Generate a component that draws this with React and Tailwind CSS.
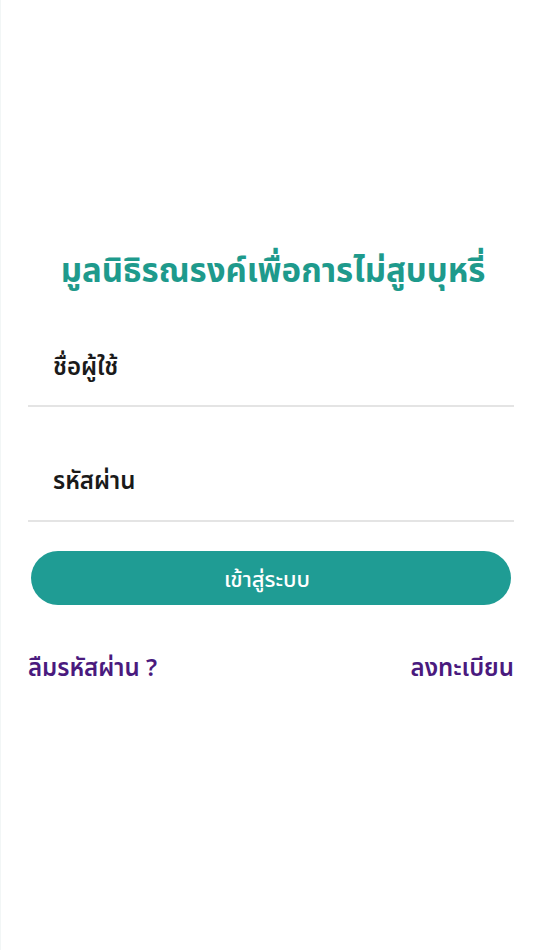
export default function App() {
  return (
    <div className="min-h-[950px] w-full bg-white" style={{ fontFamily: '"Noto Sans", "Noto Sans Thai", sans-serif' }}>
      <div className="flex flex-col pt-[243px] pl-[27px] pr-[20px] min-h-[950px] border-l border-[#f2f6f6]">
        <h1 className="text-center text-[33px] leading-[54px] font-bold text-[#1e9a8c] pl-[4px]">มูลนิธิรณรงค์เพื่อการไม่สูบบุหรี่</h1>
        <div className="mt-[42px] flex h-[68px] items-center border-b-2 border-[#e4e4e4] pl-[25px] pb-[12px]">
          <span className="text-[24px] font-semibold text-[#1a1a1a]">ชื่อผู้ใช้</span>
        </div>
        <div className="mt-[45px] flex h-[70px] items-center border-b-2 border-[#e4e4e4] pl-[25px] pb-[12px]">
          <span className="text-[24px] font-semibold text-[#1a1a1a]">รหัสผ่าน</span>
        </div>
        <button className="mt-[29px] ml-[3px] mr-[3px] flex h-[54px] items-center justify-center rounded-full bg-[#1f9c94] text-[22px] font-medium text-white pr-[8px]">
          เข้าสู่ระบบ
        </button>
        <div className="mt-[44px] flex items-center justify-between">
          <span className="text-[24px] font-semibold text-[#4a1a7e]">ลืมรหัสผ่าน ?</span>
          <span className="text-[24px] font-semibold text-[#4a1a7e]">ลงทะเบียน</span>
        </div>
      </div>
    </div>
  );
}
